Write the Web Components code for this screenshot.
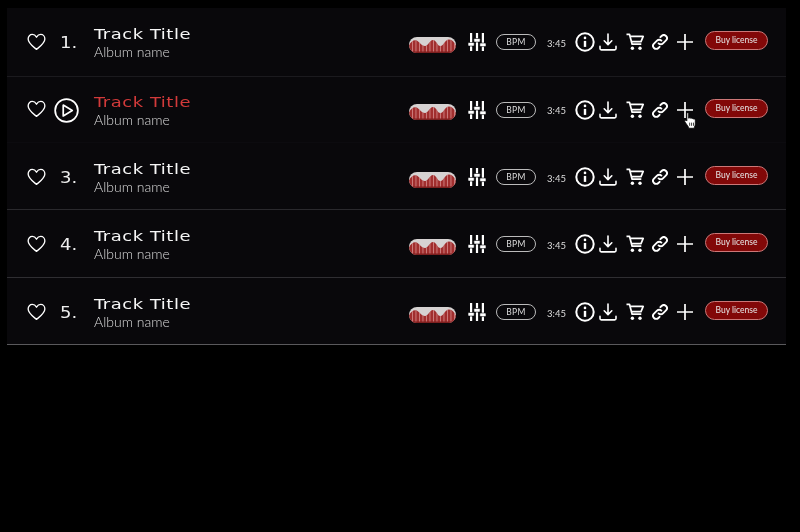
<!DOCTYPE html>
<html>
<head>
<meta charset="utf-8">
<title>Tracks</title>
<style>
  html, body { margin: 0; background: #000; height: 100%; }
  body { padding: 7.5px 14px 0 7px; box-sizing: border-box; overflow: hidden; }
</style>
</head>
<body>
<track-list>
  <track-row number="1." line="#1b1a1e" height="69"></track-row>
  <track-row number="2." active line="#0c0b0f" height="66"></track-row>
  <track-row number="3." line="#2a292d"></track-row>
  <track-row number="4." line="#2f2e32"></track-row>
  <track-row number="5." line="#5a595c"></track-row>
</track-list>

<script>
const ICONS = {
  heart: `<svg width="19" height="18" viewBox="0 0 20 18" preserveAspectRatio="none" fill="none" stroke="#fff" stroke-width="1.4" stroke-linejoin="round"><path d="M10 16.4C5.6 12.9 1.2 9.9 1.2 5.9 1.2 3.2 3.2 1.4 5.5 1.4c1.9 0 3.4 1 4.5 2.8 1.1-1.8 2.6-2.8 4.5-2.8 2.3 0 4.3 1.8 4.3 4.5 0 4-4.4 7-8.8 10.5z"/></svg>`,
  play: `<svg width="25" height="25" viewBox="0 0 26 26" fill="none" stroke="#fff" stroke-width="1.8" stroke-linejoin="round"><circle cx="13" cy="13" r="11.8"/><path d="M9.6 7.4v11.2l9.4-5.6z"/></svg>`,
  sliders: `<svg width="18" height="18" viewBox="0 0 18 18" fill="#fff"><rect x="2" y="0" width="2.2" height="18"/><rect x="7.9" y="0" width="2.2" height="18"/><rect x="13.8" y="0" width="2.2" height="18"/><rect x="0" y="9.5" width="6.2" height="3.6" rx="0.8" stroke="#09080b" stroke-width="0.6"/><rect x="5.9" y="5.5" width="6.2" height="3.6" rx="0.8" stroke="#09080b" stroke-width="0.6"/><rect x="11.8" y="10" width="6.2" height="3.6" rx="0.8" stroke="#09080b" stroke-width="0.6"/></svg>`,
  info: `<svg width="20" height="20" viewBox="0 0 20 20" fill="none" stroke="#fff"><circle cx="10" cy="10" r="8.7" stroke-width="2"/><circle cx="10" cy="5.9" r="1.3" fill="#fff" stroke="none"/><path d="M10 8.9v6" stroke-width="2.4"/></svg>`,
  download: `<svg width="18" height="18" viewBox="0 0 18 18" fill="none" stroke="#fff" stroke-width="1.6" stroke-linecap="round" stroke-linejoin="round"><path d="M9 1v10.500M5.200 7.800 9 11.600l3.800-3.800M1 13.400V15.600c0 .8.500 1.300 1.300 1.300h13.400c.8 0 1.300-.5 1.300-1.300V13.400"/></svg>`,
  cart: `<svg width="18" height="18" viewBox="0 0 18 18" fill="none" stroke="#fff" stroke-width="1.7" stroke-linejoin="round"><path d="M.5 1.300h3l2.600 9.900h9.200"/><path d="M4.200 3.400h13l-2.200 5.200H5.600"/><circle cx="6.400" cy="15.200" r="1.700" fill="#fff" stroke="none"/><circle cx="14" cy="15.200" r="1.700" fill="#fff" stroke="none"/></svg>`,
  link: `<svg width="16" height="16" viewBox="0 0 16 16" fill="none" stroke="#fff" stroke-width="1.900" stroke-linecap="round"><path d="M6.600 9.400a3.100 3.100 0 0 0 4.400 0l3-3a3.100 3.100 0 0 0-4.400-4.400L8.400 3.200"/><path d="M9.400 6.600a3.100 3.100 0 0 0-4.400 0l-3 3A3.100 3.100 0 0 0 6.400 14l1.200-1.200"/></svg>`,
  plus: `<svg width="16" height="16" viewBox="0 0 16 16" stroke="#fff" stroke-width="1.700"><path d="M8 0v16M0 8h16"/></svg>`,
  hand: `<svg width="13" height="17" viewBox="0 0 12 16"><path d="M2.600 1.400c0-1 1.600-1 1.600 0v4.400l.7-.2c.4-.2 1 0 1.200.3.500-.3 1.100-.1 1.300.3.500-.3 1.200 0 1.500.4.600-.2 1.600.2 1.600 1.100v3.600c0 1.300-.5 2-.9 3v1H4.200v-1L.8 9.300c-.8-1 .4-2.100 1.300-1.300l.5.5z" fill="#fff" stroke="#000" stroke-width=".7"/><path d="M5.200 10v3M7 10v3M8.800 10v3" stroke="#000" stroke-width=".7"/></svg>`
};

class TrackList extends HTMLElement {
  constructor() {
    super();
    this.attachShadow({ mode: "open" });
    this.shadowRoot.innerHTML = `
      <style>
        :host { display: flex; flex-direction: column; background: #09080b; }
      </style>
      <slot></slot>
    `;
  }
}

class WaveForm extends HTMLElement {
  constructor() {
    super();
    this.attachShadow({ mode: "open" });
    let bars = "";
    for (let x = 3; x < 46; x += 3.5) {
      bars += `<rect x="${x}" y="0" width="0.9" height="16" fill="#e6a8a8"/>`;
    }
    const red = "M0 8.500C1.500 5 4 3 6.500 3.200 10 3.500 12 9 16 9c3.500 0 4.500-6 8-6s4.500 6.300 7.500 6.100C34.500 8.900 36 2.500 40 2.500c3.500 0 5.500 3 7 6.500v7H0z";
    this.shadowRoot.innerHTML = `
      <style>
        :host { display: block; width: 47px; height: 16px; }
        svg { display: block; }
      </style>
      <svg width="47" height="16" viewBox="0 0 47 16">
        <clipPath id="pill"><rect width="47" height="16" rx="8"/></clipPath>
        <clipPath id="red"><path d="${red}"/></clipPath>
        <g clip-path="url(#pill)">
          <rect width="47" height="16" fill="#d6d2d2"/>
          <path d="${red}" fill="#a12e2e"/>
          <g clip-path="url(#red)" opacity="0.7">${bars}</g>
          <rect y="14.500" width="47" height="1.500" fill="#7e1f1f"/>
        </g>
      </svg>
    `;
  }
}

class TrackRow extends HTMLElement {
  constructor() {
    super();
    this.attachShadow({ mode: "open" });
  }

  connectedCallback() {
    this.render();
  }

  render() {
    const number = this.getAttribute("number") || "";
    const active = this.hasAttribute("active");
    const line = this.getAttribute("line") || "#222";
    const height = this.getAttribute("height");

    this.shadowRoot.innerHTML = `
      <style>
        :host {
          display: block;
          height: ${height || 67.5}px;
          box-sizing: border-box;
          border-bottom: 1px solid ${line};
          padding-bottom: ${height ? 1.5 : 0}px;
          font-family: "Lato", sans-serif;
          color: #fff;
        }
        .row {
          display: flex;
          align-items: center;
          height: 100%;
          padding-left: 20px;
          will-change: transform;
        }
        .heart { width: 19px; display: flex; margin-top: 1px; }
        .num {
          width: 48px;
          display: flex;
          align-items: center;
          padding-left: ${active ? 8 : 14}px;
          box-sizing: border-box;
          margin-top: 3px;
          font: 15px "DejaVu Sans", sans-serif;
          color: #eee;
        }
        .num span { display: inline-block; transform: scaleX(1.2); transform-origin: left center; }
        .text { flex: 1; display: flex; flex-direction: column; min-width: 0; padding-top: 4px; }
        .title {
          font: 13.5px/17px "DejaVu Sans", sans-serif;
          color: ${active ? "#d23a3a" : "#f6f6f6"};
          letter-spacing: 0.4px;
          transform: scaleX(1.33);
          transform-origin: left center;
          white-space: nowrap;
        }
        .album {
          font-size: 14px;
          line-height: 17px;
          font-weight: 300;
          color: #dcdcdc;
        }
        .tools { display: flex; align-items: center; padding-right: 18px; margin-top: 2px; }
        .tools > * { flex: none; }
        .ic { display: flex; position: relative; }
        wave-form { margin-top: 5px; }
        .bpm {
          width: 40px;
          height: 16px;
          box-sizing: border-box;
          border: 1px solid #bbb;
          border-radius: 8px;
          font-size: 8.5px;
          letter-spacing: 0.3px;
          line-height: 14px;
          text-align: center;
          color: #ddd;
          margin-left: 10px;
        }
        .time { font-size: 9.5px; color: #ddd; width: 18px; margin-left: 11px; margin-top: 2px; }
        .buy {
          width: 63px;
          height: 19px;
          box-sizing: border-box;
          border: 1px solid #c77;
          border-radius: 10px;
          background: #820808;
          font-size: 8.5px;
          line-height: 17px;
          text-align: center;
          color: #e6e6e6;
          margin-left: 12px;
          margin-bottom: 3px;
        }
        .hand { position: absolute; left: 7px; top: 10px; display: flex; }
      </style>
      <div class="row">
        <span class="heart">${ICONS.heart}</span>
        <span class="num">${active ? ICONS.play : `<span>${number}</span>`}</span>
        <div class="text">
          <div class="title">Track Title</div>
          <div class="album">Album name</div>
        </div>
        <div class="tools">
          <wave-form></wave-form>
          <span class="ic" style="margin-left:12px">${ICONS.sliders}</span>
          <span class="bpm">BPM</span>
          <span class="time">3:45</span>
          <span class="ic" style="margin-left:10px">${ICONS.info}</span>
          <span class="ic" style="margin-left:4px">${ICONS.download}</span>
          <span class="ic" style="margin-left:9px">${ICONS.cart}</span>
          <span class="ic" style="margin-left:8px">${ICONS.link}</span>
          <span class="ic" style="margin-left:9px">${ICONS.plus}${active ? `<span class="hand">${ICONS.hand}</span>` : ""}</span>
          <span class="buy">Buy license</span>
        </div>
      </div>
    `;
  }
}

customElements.define("track-list", TrackList);
customElements.define("wave-form", WaveForm);
customElements.define("track-row", TrackRow);
</script>
</body>
</html>
